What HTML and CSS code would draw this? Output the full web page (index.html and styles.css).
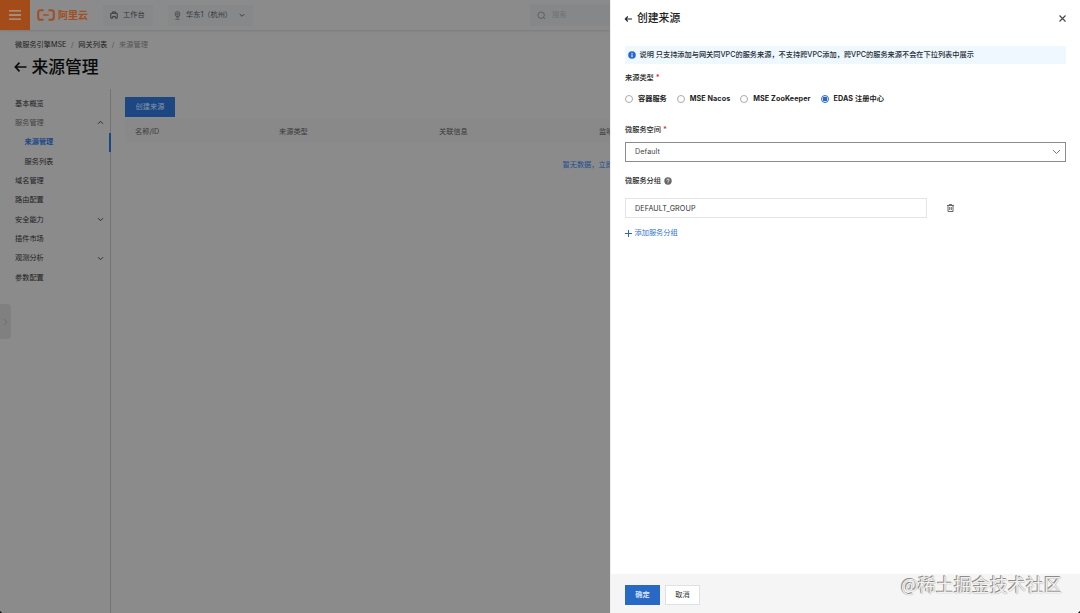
FILE: index.html
```html
<!DOCTYPE html>
<html lang="zh-CN">
<head>
<meta charset="utf-8">
<title>来源管理</title>
<link rel="stylesheet" href="styles.css">
</head>
<body>
<div class="app">
  <div class="page">
    <header class="topbar">
      <div class="menu"><svg width="12" height="10" viewBox="0 0 12 10"><path d="M0 .8h12M0 5h12M0 9.200h12" stroke="#aaa19b" stroke-width="1.300"/></svg></div>
      <div class="logo">
        <svg width="18" height="12" viewBox="0 0 18 12" fill="none" stroke="#a34e20"><path d="M6.500 1.200H3.600Q1.200 1.200 1.200 3.600v4.800q0 2.400 2.400 2.400h2.900M11.500 1.200h2.900q2.400 0 2.400 2.400v4.800q0 2.400-2.400 2.400h-2.900" stroke-width="2"/><path d="M6.300 6h5.400" stroke-width="1.500"/></svg>
        <span>阿里云</span>
      </div>
      <div class="chip chip-work"><svg width="8" height="8" viewBox="0 0 8 8" fill="none" stroke="#3b3b3b"><path d="M2.500 2V.9h3V2M.8 2.300h6.400v4.900H5.300V5.400H2.700v1.800H.8z"/></svg><span>工作台</span></div>
      <div class="chip chip-region"><svg width="7" height="9" viewBox="0 0 7 9" fill="none" stroke="#444" stroke-width=".8"><circle cx="3.500" cy="3" r="2.400"/><circle cx="3.500" cy="3" r=".8"/><path d="M2 5l1.500 2L5 5M1.500 8.200h4"/></svg><span>华东1（杭州）</span><svg class="chip-arrow" width="6" height="5" viewBox="0 0 6 5" fill="none" stroke="#3e3e3e"><path d="m.7 1 2.300 2.300L5.300 1"/></svg></div>
      <div class="search"><svg width="9" height="9" viewBox="0 0 9 9" fill="none" stroke="#555" stroke-width=".8"><circle cx="4.200" cy="4.200" r="3.200"/><path d="m6.500 6.500 1.500 1.500"/></svg><span>搜索</span></div>
    </header>
    <nav class="crumbs"><span>微服务引擎MSE</span><i>/</i><span>网关列表</span><i>/</i><span class="current">来源管理</span></nav>
    <h1 class="title"><svg width="13" height="12" viewBox="0 0 13 12" fill="none" stroke="#0c0c0c" stroke-width="1.700"><path d="M12.500 6H1.500M5.500 1.700 1.400 6l4.100 4.300"/></svg>来源管理</h1>
    <div class="body">
      <aside class="side">
        <div class="item">基本概览</div>
        <div class="item group">服务管理<svg width="7" height="5" viewBox="0 0 7 5"><path d="M1 3.800 3.500 1.300 6 3.800"/></svg></div>
        <div class="item sub active">来源管理</div>
        <div class="item sub">服务列表</div>
        <div class="item">域名管理</div>
        <div class="item">路由配置</div>
        <div class="item">安全能力<svg width="7" height="5" viewBox="0 0 7 5"><path d="m1 1.200 2.500 2.500L6 1.200"/></svg></div>
        <div class="item">插件市场</div>
        <div class="item">观测分析<svg width="7" height="5" viewBox="0 0 7 5"><path d="m1 1.200 2.500 2.500L6 1.200"/></svg></div>
        <div class="item">参数配置</div>
      </aside>
      <main class="main">
        <button class="create">创建来源</button>
        <div class="thead"><span>名称/ID</span><span>来源类型</span><span>关联信息</span><span>监听状态</span></div>
        <div class="empty">暂无数据，立即创建</div>
      </main>
    </div>
    <div class="handle"><svg width="5" height="8" viewBox="0 0 5 8" fill="none" stroke="#686868" stroke-width=".8"><path d="m1 1 3 3-3 3"/></svg></div>
  </div>

  <section class="drawer">
    <header class="dhead"><svg width="9" height="8" viewBox="0 0 9 8" fill="none" stroke="#222" stroke-width="1.100"><path d="M8 4H1.500M3.800 1.500 1.300 4l2.500 2.500"/></svg><h2>创建来源</h2><svg class="close" width="7" height="7" viewBox="0 0 7 7" stroke="#444" stroke-width="1.100"><path d="m.5.5 6 6m0-6-6 6"/></svg></header>
    <div class="form">
      <div class="notice"><svg width="8" height="8" viewBox="0 0 8 8"><circle cx="4" cy="4" r="3.800" fill="#2866cf"/><path d="M4 3.400v2.800M4 1.800v1" stroke="#fff" stroke-width="1"/></svg><span>说明 只支持添加与网关同VPC的服务来源，不支持跨VPC添加，跨VPC的服务来源不会在下拉列表中展示</span></div>
      <div class="label label-type">来源类型<b>*</b></div>
      <div class="radios">
        <label><i class="radio"></i><span>容器服务</span></label>
        <label><i class="radio"></i><span class="latin">MSE Nacos</span></label>
        <label><i class="radio"></i><span class="latin">MSE ZooKeeper</span></label>
        <label><i class="radio on"></i><span class="latin">EDAS 注册中心</span></label>
      </div>
      <div class="label label-space">微服务空间<b>*</b></div>
      <div class="select">Default<svg width="9" height="6" viewBox="0 0 9 6" fill="none" stroke="#666" stroke-width=".9"><path d="m1 1 3.500 3.500L8 1"/></svg></div>
      <div class="label label-group">微服务分组<svg width="8" height="8" viewBox="0 0 8 8"><circle cx="4" cy="4" r="3.700" fill="#666"/><path d="M2.800 3.300q0-1.300 1.200-1.300t1.200 1.100Q5.200 3.800 4 4.200v.6M4 5.400v.9" fill="none" stroke="#fff" stroke-width=".8"/></svg></div>
      <div class="grouprow"><div class="input">DEFAULT_GROUP</div><svg width="7" height="8" viewBox="0 0 7 8" fill="none" stroke="#555" stroke-width=".9"><path d="M0 1.500h7M2.300 1.200V.5h2.400v.7M1 1.800v5.700h5V1.800M2.700 3v3M4.300 3v3"/></svg></div>
      <div class="add"><svg width="7" height="7" viewBox="0 0 7 7" stroke="#2767c0" stroke-width="1"><path d="M3.500 0v7M0 3.500h7"/></svg>添加服务分组</div>
    </div>
    <footer class="dfoot"><button class="ok">确定</button><button class="cancel">取消</button></footer>
  </section>
  <div class="watermark">@稀土掘金技术社区</div>
  <i class="corner left"></i><i class="corner right"></i>
</div>
</body>
</html>
```
FILE: styles.css
```css
* { box-sizing: border-box; }
body { margin: 0; font: 7.2px/10px Inter, "Noto Sans CJK SC", sans-serif; color: #222; }
svg { display: block; flex: none; }
i { font-style: normal; }
button { font: inherit; padding: 0; border: 0; }
.app { position: relative; display: flex; width: 1080px; height: 613px; overflow: hidden; background: #8b8b8b; }
.page { position: relative; display: flex; flex: none; flex-direction: column; width: 610px; overflow: hidden; white-space: nowrap; color: #202020; }

.topbar { display: flex; align-items: center; flex: none; height: 30px; box-shadow: 0 1px 2px #7b7b7b; }
.menu { display: grid; place-items: center; width: 30px; height: 30px; background: #a34c1a; }
.logo { display: flex; align-items: center; gap: 3px; width: 73px; padding-left: 7px; color: #a34e20; font-size: 10px; font-weight: 700; }
.chip { display: flex; align-items: center; height: 21px; background: #868889; color: #353535; }
.chip-work { width: 50px; padding-left: 7px; gap: 5px; }
.chip-region { width: 85px; margin-left: 15px; padding-left: 6px; gap: 5px; }
.chip-arrow { margin-left: 2px; }
.search { display: flex; align-items: center; gap: 6px; width: 80px; height: 22px; margin-left: auto; padding-left: 7px; background: #858788; color: #717171; }

.crumbs { display: flex; gap: 4.7px; height: 14px; margin: 8px 0 0 15px; line-height: 13px; }
.crumbs i { color: #555; }
.crumbs .current { color: #555; }
.title { display: flex; align-items: center; gap: 4.5px; height: 30px; margin: 0 0 0 14px; font-size: 16.8px; line-height: 30px; font-weight: 500; color: #090909; }

.body { display: flex; flex: 1; min-height: 0; margin-top: 7px; }
.side { flex: none; width: 111px; padding-top: 5px; border-right: 1px solid #747474; }
.item { display: flex; align-items: center; justify-content: space-between; height: 19.33px; padding: 0 6px 0 15px; }
.item svg { fill: none; stroke: #222; stroke-width: 0.9; }
.group { color: #444; }
.sub { padding-left: 24.5px; }
.active { margin-right: -1px; border-right: 2px solid #1a4887; color: #1a4887; font-weight: 600; }
.main { flex: 1; min-width: 0; padding: 8px 0 0 14px; }
.create { display: block; width: 50px; height: 20px; background: #1c4783; color: #8595a8; }
.thead { display: grid; grid-template-columns: 144px 160px 160px 100px; height: 24px; margin-top: 2px; padding-left: 10px; line-height: 25px; background: #898989; color: #393939; }
.empty { margin-top: 17px; padding-left: 437.5px; color: #204d91; }
.handle { position: absolute; left: 0; top: 304px; display: grid; place-items: center; width: 11px; height: 35px; background: #808080; border-radius: 0 4px 4px 0; }

.drawer { display: flex; flex-direction: column; flex: 1; min-width: 0; background: #fff; border-left: 1px solid #eee; }
.dhead { display: flex; align-items: center; height: 37px; padding: 0 14px 0 13px; }
.dhead h2 { margin: 0 0 0 4px; font-size: 10.8px; line-height: 36px; font-weight: 500; }
.close { margin-left: auto; }
.form { flex: 1; padding: 9px 14px 0; }
.notice { display: flex; align-items: center; gap: 3.5px; height: 18px; padding-left: 3px; background: #eff8ff; color: #242b35; font-weight: 500; white-space: nowrap; }
.label { display: flex; align-items: center; height: 12px; font-weight: 500; color: #222; }
.label b { margin-left: 2px; color: #d33; }
.label svg { margin-left: 3px; }
.label-type { margin-top: 8px; }
.radios { display: flex; gap: 10px; height: 12px; margin-top: 9px; font-weight: 700; color: #222; }
.radios label { display: flex; align-items: center; gap: 5px; }
.latin { letter-spacing: 0.08px; }
.radio { width: 8px; height: 8px; border: 1px solid #aaa; border-radius: 50%; }
.radio.on { border: 1px solid #2767c8; background: radial-gradient(circle, #2767c8 2.1px, #fff 2.6px); }
.label-space { margin-top: 19px; }
.select { display: flex; align-items: center; justify-content: space-between; height: 20px; margin-top: 6px; padding: 0 4px 0 9px; border: 1px solid #8b8b8b; color: #444; letter-spacing: 0.08px; }
.label-group { margin-top: 13px; }
.grouprow { display: flex; align-items: center; gap: 20px; margin-top: 11px; }
.input { width: 302px; height: 20px; padding-left: 9px; border: 1px solid #e4e4e4; line-height: 19px; color: #333; letter-spacing: 0.1px; }
.add { display: flex; align-items: center; gap: 2.5px; height: 12px; margin-top: 9px; color: #3475c8; }
.dfoot { display: flex; gap: 5px; height: 39px; padding: 11px 14px; background: #f5f5f5; }
.ok { width: 35px; height: 20px; background: #2769c4; color: #e5eefb; font-weight: 500; }
.cancel { width: 35px; height: 20px; background: #fff; border: 1px solid #e1e1e1; color: #333; }
.watermark { position: absolute; left: 901px; top: 571px; font: 18px/26px "Noto Sans CJK SC", sans-serif; color: #f1f1f1; text-shadow: -1px -1px 0 #8c8c8c, 0 0 1px #777; white-space: nowrap; }
.corner { position: absolute; bottom: 0; width: 4px; height: 4px; }
.left { left: 0; background: radial-gradient(circle at 100% 0, transparent 4px, #111 4.5px); }
.right { right: 0; background: radial-gradient(circle at 0 0, transparent 4px, #111 4.5px); }
```
